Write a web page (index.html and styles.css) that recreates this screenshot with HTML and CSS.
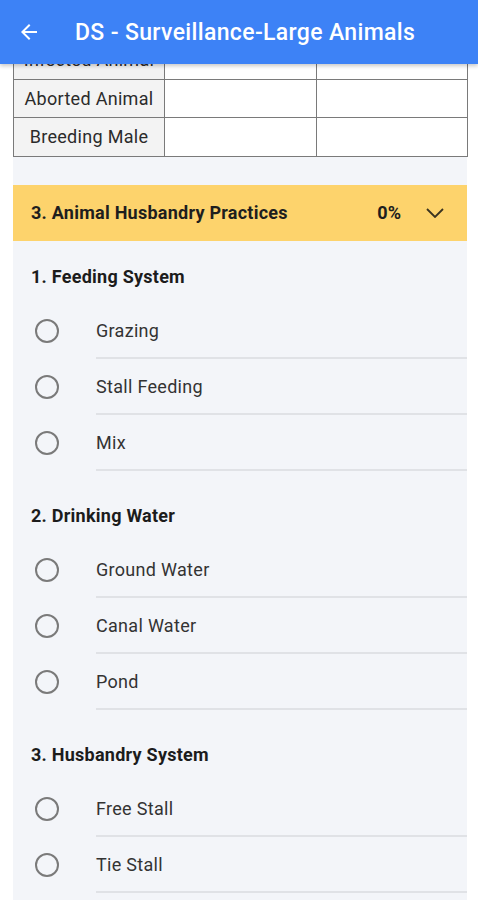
FILE: index.html
```html
<!DOCTYPE html>
<html lang="en">
<head>
<meta charset="utf-8">
<title>DS - Surveillance-Large Animals</title>
<link rel="stylesheet" href="styles.css">
</head>
<body>
<header class="appbar">
  <svg class="back" width="24" height="24" viewBox="0 0 24 24" aria-hidden="true"><path d="M20 11H7.83l5.59-5.59L12 4l-8 8 8 8 1.41-1.41L7.83 13H20v-2z" fill="#fff"/></svg>
  <h1 class="appbar-title">DS - Surveillance-Large Animals</h1>
</header>
<main class="content">
  <table class="grid">
    <tr><td class="label">Infected Animal</td><td></td><td></td></tr>
    <tr><td class="label">Aborted Animal</td><td></td><td></td></tr>
    <tr><td class="label">Breeding Male</td><td></td><td></td></tr>
  </table>
  <section class="panel">
    <div class="acc-head">
      <span class="acc-title">3. Animal Husbandry Practices</span>
      <span class="acc-pct">0%</span>
      <svg class="chev" width="18" height="10" viewBox="0 0 18 10" aria-hidden="true"><path d="M1 1l8 8 8-8" fill="none" stroke="#3a3320" stroke-width="1.8"/></svg>
    </div>
    <div class="question first">
      <h2 class="q-title">1. Feeding System</h2>
      <div class="opt"><span class="radio"></span><span class="opt-text">Grazing</span></div>
      <div class="opt"><span class="radio"></span><span class="opt-text">Stall Feeding</span></div>
      <div class="opt"><span class="radio"></span><span class="opt-text">Mix</span></div>
    </div>
    <div class="question">
      <h2 class="q-title">2. Drinking Water</h2>
      <div class="opt"><span class="radio"></span><span class="opt-text">Ground Water</span></div>
      <div class="opt"><span class="radio"></span><span class="opt-text">Canal Water</span></div>
      <div class="opt"><span class="radio"></span><span class="opt-text">Pond</span></div>
    </div>
    <div class="question">
      <h2 class="q-title">3. Husbandry System</h2>
      <div class="opt"><span class="radio"></span><span class="opt-text">Free Stall</span></div>
      <div class="opt"><span class="radio"></span><span class="opt-text">Tie Stall</span></div>
    </div>
  </section>
</main>
</body>
</html>
```
FILE: styles.css
```css
html, body {
  margin: 0;
  padding: 0;
  background: #ffffff;
  font-family: Roboto, "Liberation Sans", sans-serif;
  overflow: hidden;
  height: 900px;
}
.appbar {
  position: relative;
  z-index: 2;
  height: 64px;
  background: #3d82f6;
  display: flex;
  align-items: center;
  padding-left: 17px;
  box-shadow: 0 2px 4px rgba(0,0,0,0.22);
}
.back { flex: none; }
.appbar-title {
  margin: 0 0 0 34px;
  color: #fff;
  font-size: 23px;
  font-weight: 500;
  letter-spacing: 0.35px;
  white-space: nowrap;
}
.content {
  margin: -24px 11px 0 13px;
}
.grid {
  width: 455px;
  border-collapse: collapse;
  table-layout: fixed;
}
.grid td {
  border: 1.5px solid #7a7a7a;
  height: 37.5px;
  padding: 0;
  background: #fff;
}
.grid td.label {
  width: 150px;
  background: #f3f3f3;
  text-align: center;
  color: #2b2b2b;
  font-size: 18px;
  letter-spacing: 0.3px;
}
.panel {
  background: #f3f5f9;
  padding-top: 28px;
  height: 715px;
}
.acc-head {
  height: 56px;
  background: #fdd36c;
  display: flex;
  align-items: center;
  padding: 0 23px 0 18px;
}
.acc-title {
  flex: 1;
  font-size: 18px;
  font-weight: 700;
  letter-spacing: 0.25px;
  color: #1e1e1e;
}
.acc-pct {
  font-size: 18px;
  font-weight: 700;
  color: #1e1e1e;
  margin-right: 25px;
}
.chev { flex: none; }
.question { padding-top: 33px; }
.question.first { padding-top: 24px; }
.q-title {
  margin: 0 0 14px 18px;
  font-size: 18px;
  line-height: 24px;
  font-weight: 700;
  letter-spacing: 0.25px;
  color: #1c1c1c;
}
.opt {
  display: flex;
  align-items: center;
  height: 56px;
}
.radio {
  flex: none;
  box-sizing: border-box;
  width: 24px;
  height: 24px;
  border: 2px solid #7a7a7a;
  border-radius: 50%;
  margin: 0 0 0 22px;
}
.opt-text {
  flex: 1;
  align-self: stretch;
  display: flex;
  align-items: center;
  margin-left: 37px;
  padding-top: 1px;
  border-bottom: 2px solid #e0e2e6;
  font-size: 18px;
  letter-spacing: 0.3px;
  color: #333;
}
```
